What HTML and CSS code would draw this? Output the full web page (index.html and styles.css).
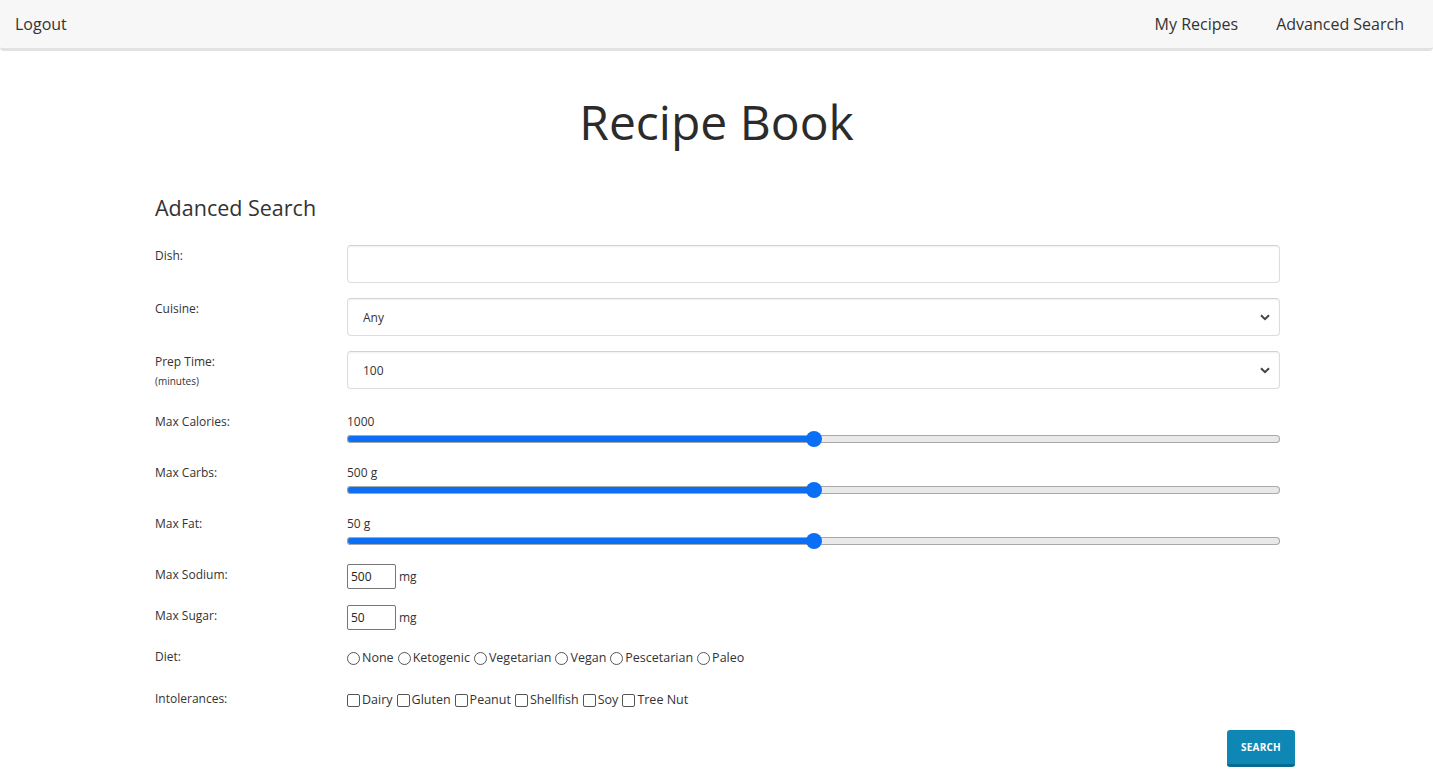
FILE: index.html
```html
<!DOCTYPE html>
<html>
<head>
<meta charset="utf-8">
<link rel="stylesheet" href="styles.css">
</head>
<body>
<nav class="navbar">
  <a class="nav-link">Logout</a>
  <div class="nav-right">
    <a class="nav-link">My Recipes</a>
    <a class="nav-link">Advanced Search</a>
  </div>
</nav>
<h1 class="title">Recipe Book</h1>
<main class="container">
  <h2 class="section-title">Adanced Search</h2>
  <form class="form">
    <div class="row row-input">
      <label class="lbl">Dish:</label>
      <div class="ctrl"><input class="text-input" type="text"></div>
    </div>
    <div class="row row-input">
      <label class="lbl">Cuisine:</label>
      <div class="ctrl select-wrap">
        <select class="select"><option>Any</option></select>
        <svg class="chev" width="10" height="7" viewBox="0 0 10 7"><path d="M1 1.2 L5 5.2 L9 1.2" fill="none" stroke="#444" stroke-width="2"/></svg>
      </div>
    </div>
    <div class="row row-input">
      <label class="lbl">Prep Time:<br><small class="hint">(minutes)</small></label>
      <div class="ctrl select-wrap">
        <select class="select"><option>100</option></select>
        <svg class="chev" width="10" height="7" viewBox="0 0 10 7"><path d="M1 1.2 L5 5.2 L9 1.2" fill="none" stroke="#444" stroke-width="2"/></svg>
      </div>
    </div>
    <div class="row row-range">
      <label class="lbl">Max Calories:</label>
      <div class="ctrl">
        <div class="range-val">1000</div>
        <input class="range" type="range" min="0" max="2000" value="1000">
      </div>
    </div>
    <div class="row row-range">
      <label class="lbl">Max Carbs:</label>
      <div class="ctrl">
        <div class="range-val">500 g</div>
        <input class="range" type="range" min="0" max="1000" value="500">
      </div>
    </div>
    <div class="row row-range">
      <label class="lbl">Max Fat:</label>
      <div class="ctrl">
        <div class="range-val">50 g</div>
        <input class="range" type="range" min="0" max="100" value="50">
      </div>
    </div>
    <div class="row row-num">
      <label class="lbl">Max Sodium:</label>
      <div class="ctrl inline"><input class="num" type="text" value="500"><span class="unit">mg</span></div>
    </div>
    <div class="row row-num">
      <label class="lbl">Max Sugar:</label>
      <div class="ctrl inline"><input class="num" type="text" value="50"><span class="unit">mg</span></div>
    </div>
    <div class="row row-check">
      <label class="lbl">Diet:</label>
      <div class="ctrl inline">
        <label class="opt"><input class="radio" type="radio" name="diet">None</label>
        <label class="opt"><input class="radio" type="radio" name="diet">Ketogenic</label>
        <label class="opt"><input class="radio" type="radio" name="diet">Vegetarian</label>
        <label class="opt"><input class="radio" type="radio" name="diet">Vegan</label>
        <label class="opt"><input class="radio" type="radio" name="diet">Pescetarian</label>
        <label class="opt"><input class="radio" type="radio" name="diet">Paleo</label>
      </div>
    </div>
    <div class="row row-check">
      <label class="lbl">Intolerances:</label>
      <div class="ctrl inline">
        <label class="opt"><input class="check" type="checkbox">Dairy</label>
        <label class="opt"><input class="check" type="checkbox">Gluten</label>
        <label class="opt"><input class="check" type="checkbox">Peanut</label>
        <label class="opt"><input class="check" type="checkbox">Shellfish</label>
        <label class="opt"><input class="check" type="checkbox">Soy</label>
        <label class="opt"><input class="check" type="checkbox">Tree Nut</label>
      </div>
    </div>
    <div class="actions">
      <button class="btn" type="button">Search</button>
    </div>
  </form>
</main>
</body>
</html>
```
FILE: styles.css
```css
* { box-sizing: border-box; }
html, body { margin: 0; padding: 0; }
body {
  font-family: "Open Sans", "Noto Sans", sans-serif;
  color: #333;
  background: #fff;
}
.navbar {
  height: 51px;
  background: #f7f7f7;
  border-bottom: 3px solid #e2e2e2;
  display: flex;
  align-items: center;
  justify-content: space-between;
  padding: 1px 29px 0 15px;
  border-radius: 0 0 4px 4px;
}
.nav-right { display: flex; gap: 38px; }
.nav-link {
  font-size: 16px;
  color: #333;
  text-decoration: none;
  line-height: 20px;
  padding-bottom: 2px;
}
.title {
  font-size: 48px;
  font-weight: 400;
  text-align: center;
  margin: 36px 0 0;
  line-height: 70px;
  color: #2b2b2b;
}
.container {
  width: 1155px;
  margin: 0 auto;
  padding: 0 14px 0 16px;
}
.section-title {
  font-size: 21.5px;
  font-weight: 400;
  margin: 36px 0 0;
  line-height: 30px;
  color: #333;
}
.form { margin-top: 22px; }
.row {
  display: grid;
  grid-template-columns: 192px 1fr;
}
.lbl {
  font-size: 12px;
  line-height: 18px;
  color: #333;
}
.hint { font-size: 10px; line-height: 16px; display: inline-block; margin-top: 2px; }
.row-input { height: 53px; }
.row-input .lbl { padding-top: 2px; }
.text-input, .select {
  width: 100%;
  height: 38px;
  border: 1px solid #ddd;
  border-top-color: #d2d2d2;
  border-radius: 4px;
  box-shadow: inset 0 1px 2px rgba(0,0,0,0.06);
  font-family: inherit;
  font-size: 12px;
  color: #333;
  background: #fff;
  padding: 0 15px;
  outline: none;
}
.select { appearance: none; -webkit-appearance: none; }
.select-wrap { position: relative; }
.chev { position: absolute; right: 10px; top: 16px; }
.row-range { height: 51px; }
.row-range .lbl { padding-top: 9px; }
.range-val { font-size: 12px; line-height: 18px; padding-top: 9px; color: #333; }
.range {
  -webkit-appearance: none;
  appearance: none;
  display: block;
  width: 100%;
  height: 16px;
  margin: 0;
  background: transparent;
}
.range::-webkit-slider-runnable-track {
  height: 8px;
  border-radius: 4px;
  background: linear-gradient(to right, #0a6ff4 0%, #0a6ff4 50%, #e9e9e9 50%, #e9e9e9 100%);
  box-shadow: inset 0 0 0 1px #a9a9a9;
}
.range::-webkit-slider-thumb {
  -webkit-appearance: none;
  width: 16px;
  height: 16px;
  border-radius: 50%;
  background: #0a6ff4;
  margin-top: -4px;
  border: none;
}
.row-num { height: 41px; }
.row-range + .row-num { margin-top: 6px; }
.row-num .lbl { padding-top: 3px; }
.inline { display: flex; align-items: center; flex-wrap: wrap; }
.row-num .inline { align-items: flex-start; padding-top: 1px; }
.num {
  width: 49px;
  height: 25px;
  border: 1px solid #767676;
  border-radius: 2px;
  font-family: inherit;
  font-size: 12px;
  padding: 0 3px;
  color: #222;
  outline: none;
}
.unit { font-size: 12px; margin-left: 3px; line-height: 25px; }
.row-check { height: 42px; }
.row-check .lbl { padding-top: 3px; }
.row-check .inline { align-items: flex-start; padding-top: 3px; }
.opt {
  display: inline-flex;
  align-items: center;
  font-size: 12.5px;
  line-height: 20px;
  margin-right: 4px;
}
.radio, .check {
  -webkit-appearance: none;
  appearance: none;
  width: 13px;
  height: 13px;
  margin: 0 2px 0 0;
  border: 1px solid #555;
  background: #fff;
}
.radio { border-radius: 50%; }
.check { border-radius: 2px; }
.actions {
  display: flex;
  justify-content: flex-end;
  margin-right: -15px;
  margin-top: 1px;
}
.btn {
  width: 68px;
  height: 37px;
  background: #0e87b5;
  border: none;
  border-bottom: 3px solid #0a6b90;
  border-radius: 3px;
  color: #fff;
  font-family: inherit;
  font-weight: 700;
  font-size: 10px;
  text-transform: uppercase;
  letter-spacing: 0.2px;
  padding: 0;
}
```
